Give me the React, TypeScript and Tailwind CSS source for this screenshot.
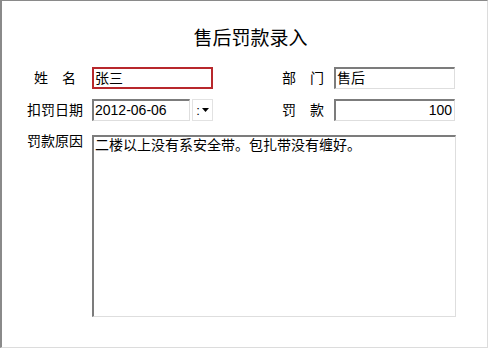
import React from 'react';

const font = { fontFamily: '"Liberation Sans", "Noto Sans CJK SC", sans-serif' };

function Field({ value, className = '', align = 'left' }: { value: string; className?: string; align?: 'left' | 'right' }) {
  return (
    <div
      className={`h-[22px] bg-white border-t-2 border-l-2 border-b border-r border-t-[#7c7c7c] border-l-[#7c7c7c] border-b-[#dedede] border-r-[#dedede] pl-[1px] pr-[2px] text-[14px] leading-[19px] text-black whitespace-nowrap overflow-hidden ${align === 'right' ? 'text-right' : ''} ${className}`}
    >
      {value}
    </div>
  );
}

export default function App() {
  return (
    <div className="w-[490px] h-[350px] bg-white" style={font}>
      <div className="w-[488px] h-[348px] border-t border-l-2 border-b border-r border-t-[#8a8a8a] border-l-[#8a8a8a] border-b-[#dcdcdc] border-r-[#dcdcdc] bg-white">
        {/* Title */}
        <div className="mt-[27px] pl-[12px] h-[22px] flex justify-center text-[19px] leading-[22px] text-black">
          售后罚款录入
        </div>

        {/* Row 1 */}
        <div className="mt-[17px] flex items-center pl-[25px] h-[22px]">
          <span className="w-[56px] text-center text-[14px] leading-[22px]">姓　名</span>
          <div className="ml-[9px] w-[121px] h-[22px] border-2 border-[#b8282c] pl-[1px] text-[14px] leading-[18px] bg-white">
            张三
          </div>
          <span className="ml-[62px] w-[56px] text-center text-[14px] leading-[22px]">部　门</span>
          <Field value="售后" className="ml-[3px] w-[121px]" />
        </div>

        {/* Row 2 */}
        <div className="mt-[10px] flex items-center pl-[25px] h-[22px]">
          <span className="w-[56px] text-center text-[14px] leading-[22px]">扣罚日期</span>
          <Field value="2012-06-06" className="ml-[9px] w-[98px] text-[13px]" />
          <div className="ml-[2px] w-[21px] h-[22px] border border-[#e2e2e2] flex items-center justify-center gap-[2px] text-[13px]">
            <span className="leading-none">:</span>
            <svg width="7" height="4" viewBox="0 0 7 4">
              <path d="M0 0h7L3.5 4z" fill="#000" />
            </svg>
          </div>
          <span className="ml-[62px] w-[56px] text-center text-[14px] leading-[22px]">罚　款</span>
          <Field value="100" align="right" className="ml-[3px] w-[121px] text-[13px]" />
        </div>

        {/* Row 3 */}
        <div className="mt-[14px] flex items-start pl-[25px]">
          <span className="w-[56px] text-center text-[14px] leading-[17px] -mt-[2px]">罚款原因</span>
          <div className="ml-[9px] w-[364px] h-[182px] bg-white border-t-2 border-l-2 border-b border-r border-t-[#7c7c7c] border-l-[#7c7c7c] border-b-[#dedede] border-r-[#dedede] pl-[1px] text-[14px] leading-[17px] text-black">
            二楼以上没有系安全带。包扎带没有缠好。
          </div>
        </div>
      </div>
    </div>
  );
}
